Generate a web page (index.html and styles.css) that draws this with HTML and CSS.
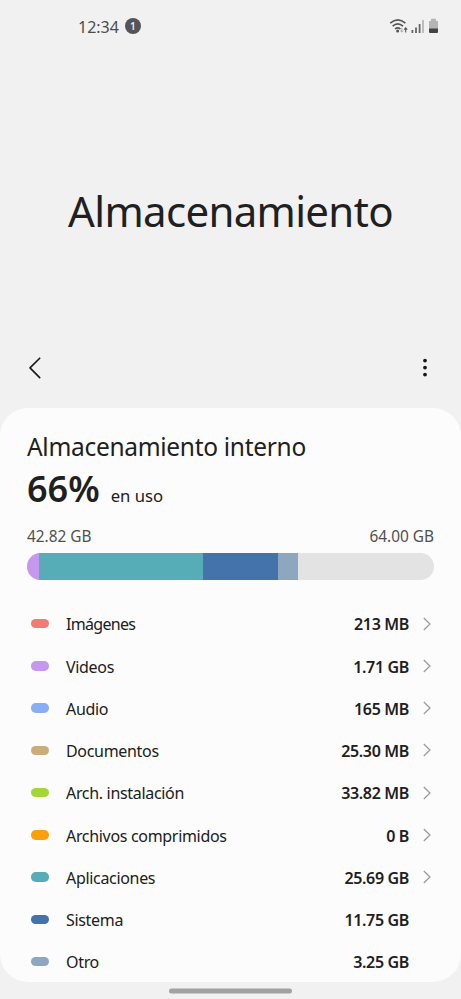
FILE: index.html
```html
<!DOCTYPE html>
<html lang="es">
<head>
<meta charset="utf-8">
<title>Almacenamiento</title>
<link rel="stylesheet" href="styles.css">
</head>
<body>
<div class="status">
  <span class="time">12:34</span><span class="count">1</span>
  <svg class="signals" width="50" height="18" viewBox="0 0 50 18" fill="none">
    <path d="M1.2 6.2Q8.8-.6 16.4 6.2M3.6 9.2Q8.8 4.6 14 9.2M6 12Q8.8 9.7 11.4 12" stroke="#555" stroke-width="1.6"/>
    <circle cx="8.6" cy="14" r="1.5" fill="#555"/>
    <path d="M12.8 11v4M11.4 13.5l1.4 1.7 1.4-1.7" stroke="#aaa"/>
    <path d="M16.7 15.5v-4.4M15.2 12.6l1.5-1.8 1.5 1.8" stroke="#555" stroke-width="1.1"/>
    <path d="M23.4 16v-3M27 16v-5.5M30.6 16V7" stroke="#666" stroke-width="1.8"/>
    <path d="M34 16V3" stroke="#b0b0b0" stroke-width="1.6"/>
    <path d="M40 4h2V1.8h5V4h2v8h-9z" fill="#b5b5b5"/>
    <path d="M40 11.5h9V15q0 1-1 1h-7q-1 0-1-1z" fill="#444"/>
  </svg>
</div>
<h1 class="title">Almacenamiento</h1>
<div class="toolbar">
  <svg width="14" height="24" viewBox="0 0 14 24" fill="none" stroke="#171717" stroke-width="1.6" stroke-linecap="round" stroke-linejoin="round"><path d="M11.7 2.2L2 11.9l9.7 9.7"/></svg>
  <svg width="6" height="24" viewBox="0 0 6 24" fill="#171717"><circle cx="3" cy="4.6" r="1.9"/><circle cx="3" cy="11.6" r="1.9"/><circle cx="3" cy="18.6" r="1.9"/></svg>
</div>
<main class="card">
  <h2 class="heading">Almacenamiento interno</h2>
  <div class="usage"><strong class="percent">66%</strong><span class="in-use">en uso</span></div>
  <div class="totals"><span>42.82 GB</span><span>64.00 GB</span></div>
  <div class="bar"><i class="videos"></i><i class="apps"></i><i class="system"></i><i class="other"></i></div>
  <ul class="list">
    <li><i class="dot images"></i><span class="name tight">Imágenes</span><b>213 MB</b><svg class="go" viewBox="0 0 8 14"><path d="M.8 1L7 7 .8 13"/></svg></li>
    <li><i class="dot videos"></i><span class="name">Videos</span><b>1.71 GB</b><svg class="go" viewBox="0 0 8 14"><path d="M.8 1L7 7 .8 13"/></svg></li>
    <li><i class="dot audio"></i><span class="name">Audio</span><b>165 MB</b><svg class="go" viewBox="0 0 8 14"><path d="M.8 1L7 7 .8 13"/></svg></li>
    <li><i class="dot documents"></i><span class="name">Documentos</span><b>25.30 MB</b><svg class="go" viewBox="0 0 8 14"><path d="M.8 1L7 7 .8 13"/></svg></li>
    <li><i class="dot installers"></i><span class="name">Arch. instalación</span><b>33.82 MB</b><svg class="go" viewBox="0 0 8 14"><path d="M.8 1L7 7 .8 13"/></svg></li>
    <li><i class="dot archives"></i><span class="name">Archivos comprimidos</span><b>0 B</b><svg class="go" viewBox="0 0 8 14"><path d="M.8 1L7 7 .8 13"/></svg></li>
    <li><i class="dot apps"></i><span class="name">Aplicaciones</span><b>25.69 GB</b><svg class="go" viewBox="0 0 8 14"><path d="M.8 1L7 7 .8 13"/></svg></li>
    <li><i class="dot system"></i><span class="name">Sistema</span><b>11.75 GB</b></li>
    <li><i class="dot other"></i><span class="name">Otro</span><b>3.25 GB</b></li>
  </ul>
</main>
<div class="home"></div>
</body>
</html>
```
FILE: styles.css
```css
* { box-sizing: border-box; }
body { margin: 0; height: 999px; overflow: hidden; background: #f1f1f1; color: #202020; font-family: "Noto Sans", sans-serif; display: flex; flex-direction: column; }
.status { height: 52px; padding: 0 22px 0 78px; display: flex; align-items: center; }
.time { font-size: 16px; padding-top: 2px; color: #4c4c4c; }
.count { width: 16px; height: 16px; margin-left: 6px; border-radius: 50%; background: #555; color: #f1f1f1; font-size: 10px; font-weight: 600; line-height: 16px; text-align: center; }
.signals { margin-left: auto; }
.title { margin: 0; height: 320px; line-height: 318px; text-align: center; font-size: 42px; letter-spacing: -.67px; font-weight: 400; white-space: nowrap; }
.toolbar { height: 36px; margin-top: -22px; padding: 0 33px 0 28px; display: flex; justify-content: space-between; align-items: center; }
.card { margin-top: 22px; height: 574px; flex: none; border-radius: 28px; background: #fcfcfc; padding: 22px 27px 0; }
.heading { margin: 0; font-size: 24.5px; letter-spacing: -.3px; line-height: 34px; font-weight: 400; white-space: nowrap; }
.usage { height: 50px; display: flex; align-items: baseline; line-height: 50px; }
.percent { font-size: 36px; font-weight: 600; }
.in-use { margin-left: 11px; font-size: 16.7px; }
.totals { margin-top: 12px; height: 22px; line-height: 22px; font-size: 15.4px; color: #505050; display: flex; justify-content: space-between; }
.bar { margin-top: 5px; height: 27px; border-radius: 14px; background: #e3e3e3; overflow: hidden; display: grid; grid-template-columns: 12px 164px 75px 20px 1fr; }
.list { list-style: none; margin: 22.5px 0 0; padding: 0; }
.list li { height: 42.25px; display: flex; align-items: center; padding-left: 4px; font-size: 16px; line-height: 24px; }
.dot { width: 18px; height: 9.4px; border-radius: 4.7px; }
.name { margin-left: 17px; flex: 1; padding-top: 1.4px; white-space: nowrap; letter-spacing: -.32px; }
.tight { letter-spacing: -.7px; }
.list b { font-weight: 600; margin-right: 25px; padding-top: 1.4px; letter-spacing: -.35px; }
.go { width: 8px; height: 14px; margin: 0 3px 0 -11px; fill: none; stroke: #999; stroke-width: 1.2; }
.images { background: #f07c74; }
.videos { background: #c597ee; }
.audio { background: #88aff3; }
.documents { background: #cbad7c; }
.installers { background: #a4d638; }
.archives { background: #fba00b; }
.apps { background: #56acb7; }
.system { background: #4472aa; }
.other { background: #8ea7be; }
.home { width: 123px; height: 5px; margin: 6px auto 0; border-radius: 3px; background: #a2a2a2; transform: translateY(.5px); }
```
